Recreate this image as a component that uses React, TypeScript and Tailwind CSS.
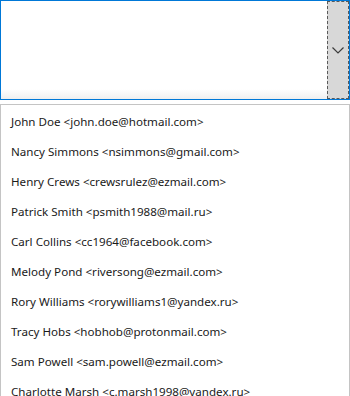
import React from "react";

const people = [
  "John Doe <john.doe@hotmail.com>",
  "Nancy Simmons <nsimmons@gmail.com>",
  "Henry Crews <crewsrulez@ezmail.com>",
  "Patrick Smith <psmith1988@mail.ru>",
  "Carl Collins <cc1964@facebook.com>",
  "Melody Pond <riversong@ezmail.com>",
  "Rory Williams <rorywilliams1@yandex.ru>",
  "Tracy Hobs <hobhob@protonmail.com>",
  "Sam Powell <sam.powell@ezmail.com>",
  "Charlotte Marsh <c.marsh1998@yandex.ru>",
];

export default function App() {
  return (
    <div
      className="w-[350px] h-[396px] overflow-hidden bg-white"
      style={{ fontFamily: '"Noto Sans", "Open Sans", sans-serif' }}
    >
      <div className="h-[100px] border border-[#0078d7] flex bg-gradient-to-b from-white from-[90%] to-[#efefef]">
        <div className="flex-1" />
        <div className="w-[22px] h-full border border-dashed border-[#5a5a5a] bg-[#d8d8d8] flex items-center justify-center">
          <svg width="12" height="7" viewBox="0 0 12 7" fill="none">
            <path d="M0.5 0.5 L6 6 L11.5 0.5" stroke="#3c3c3c" strokeWidth="1.2" />
          </svg>
        </div>
      </div>
      <div className="mt-[4px] border border-[#c4c4c4] pt-[2px]">
        {people.map((p) => (
          <div key={p} className="h-[30px] flex items-center pl-[10px] text-[11.6px] text-[#1a1a1a] whitespace-nowrap">
            {p}
          </div>
        ))}
      </div>
    </div>
  );
}
